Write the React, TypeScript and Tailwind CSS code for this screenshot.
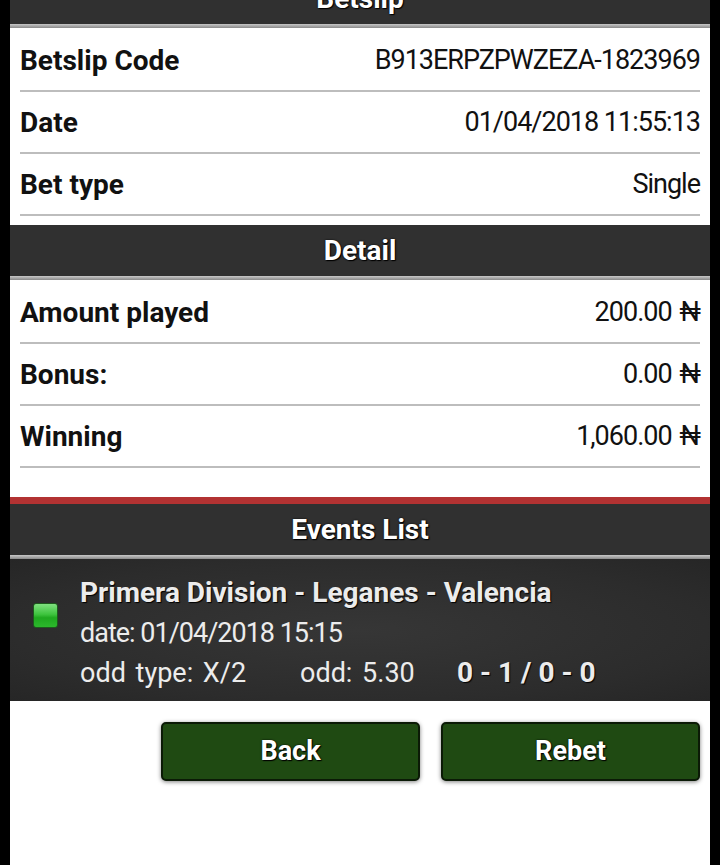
import React from "react";

const Row = ({ label, value, naira }: { label: string; value: string; naira?: boolean }) => (
  <div className="mx-[10px]">
    <div className="h-[60px] flex items-center justify-between pt-[1px]">
      <span className="font-bold text-[28px] text-[#111]">{label}</span>
      <span className="text-[27px] tracking-[-1px] text-[#111]">
        {value}
        {naira ? <span className="ml-[8px]">₦</span> : null}
      </span>
    </div>
    <div className="h-[2px] bg-[#bdbdbd]" />
  </div>
);

const Header = ({ title, extra = "" }: { title: string; extra?: string }) => (
  <div className={extra}>
    <div className="h-[51px] bg-[#303030] flex items-center justify-center">
      <span
        className="text-white font-bold text-[28px]"
        style={{ textShadow: "0 0 2px #000, 1px 1px 1px #000" }}
      >
        {title}
      </span>
    </div>
    <div className="h-[4px] bg-gradient-to-b from-[#c8c8c8] to-[#8a8a8a]" />
  </div>
);

export default function App() {
  return (
    <div
      className="w-[720px] h-[865px] bg-black px-[10px] overflow-hidden"
      style={{ fontFamily: "Roboto, 'Liberation Sans', sans-serif" }}
    >
      <div className="bg-white h-full flex flex-col">
        <Header title="Betslip" extra="-mt-[27px]" />
        <div className="h-[2px]" />
        <Row label="Betslip Code" value="B913ERPZPWZEZA-1823969" />
        <Row label="Date" value="01/04/2018 11:55:13" />
        <Row label="Bet type" value="Single" />
        <div className="h-[9px]" />
        <Header title="Detail" />
        <div className="h-[2px]" />
        <Row label="Amount played" value="200.00" naira />
        <Row label="Bonus:" value="0.00" naira />
        <Row label="Winning" value="1,060.00" naira />
        <div className="h-[29px]" />
        <div className="h-[7px] bg-[#b23232]" />
        <Header title="Events List" />
        <div
          className="h-[142px] flex items-center"
          style={{ background: "radial-gradient(ellipse at center, #363636 0%, #2c2c2c 70%, #262626 100%)" }}
        >
          <div className="w-[70px] flex justify-center -mt-[30px]">
            <div
              className="w-[25px] h-[25px] rounded-[3px] border border-[#1d5a1d]"
              style={{ background: "linear-gradient(to bottom, #7fe07f 0%, #3ec43e 45%, #1fa81f 60%, #2cb82c 100%)" }}
            />
          </div>
          <div className="flex flex-col text-[#ececec] leading-[40px] pt-[5px]">
            <span className="font-bold text-[28px]" style={{ textShadow: "1px 1px 1px #000" }}>
              Primera Division - Leganes - Valencia
            </span>
            <span className="text-[27px] tracking-[-1px]">date: 01/04/2018 15:15</span>
            <div className="flex items-baseline">
              <span className="w-[220px] text-[27px] [word-spacing:3px]">odd type: X/2</span>
              <span className="w-[157px] text-[27px] [word-spacing:3px]">odd: 5.30</span>
              <span className="font-bold text-[28px]" style={{ textShadow: "1px 1px 1px #000" }}>0 - 1 / 0 - 0</span>
            </div>
          </div>
        </div>
        <div className="flex justify-end gap-[21px] pr-[10px] pt-[21px]">
          {["Back", "Rebet"].map((t) => (
            <div
              key={t}
              className="w-[259px] h-[59px] bg-[#1f4a12] border-2 border-[#0b1a06] rounded-[5px] flex items-center justify-center shadow-[0_1px_4px_rgba(0,0,0,0.5)]"
            >
              <span className="text-white font-bold text-[27px]" style={{ textShadow: "0 0 2px #000, 1px 1px 1px #000" }}>
                {t}
              </span>
            </div>
          ))}
        </div>
      </div>
    </div>
  );
}
